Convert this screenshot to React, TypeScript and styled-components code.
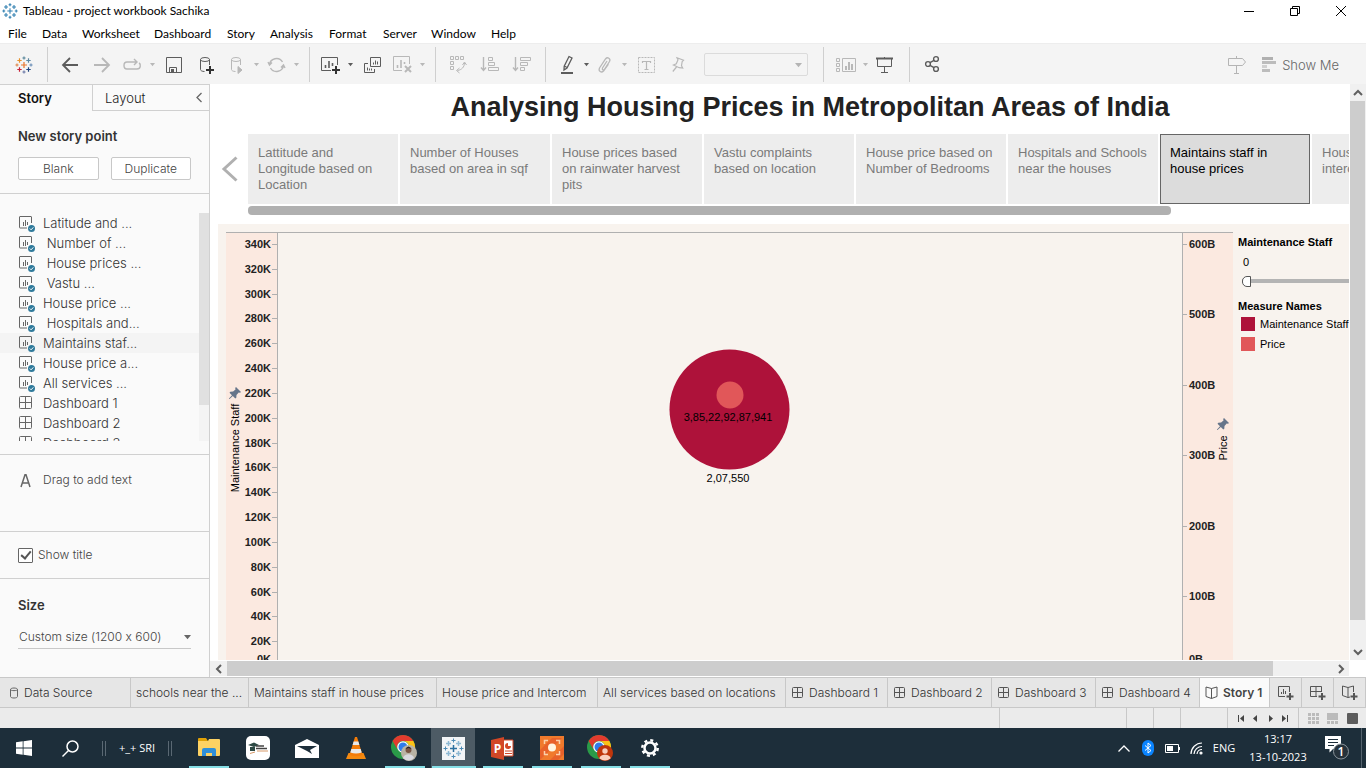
import React, { useState } from 'react';
import type { ReactNode } from 'react';
import styled, { createGlobalStyle } from 'styled-components';

const UI = `Inter, "Open Sans", sans-serif`;
const SYS = `Lato, "Open Sans", sans-serif`;
const BAR = `"Open Sans", "Noto Sans", sans-serif`;
const ARIAL = `"Liberation Sans", Arial, sans-serif`;

const GlobalStyle = createGlobalStyle`
  * { box-sizing: border-box; }
  html, body { margin: 0; overflow: hidden; }
  body { font: 12px/16px ${UI}; color: #444; background: #fff; }
  button, select, input { font: inherit; color: inherit; margin: 0; }
  button { border: 0; padding: 0; background: none; cursor: pointer; }
  svg { display: block; flex: none; overflow: visible; }
  ul { list-style: none; margin: 0; padding: 0; }
`;

const Window = styled.div`
  display: flex;
  flex-direction: column;
  height: 100vh;
  min-width: 0;
`;

/* ---------- title bar and menu ---------- */

const TitleBar = styled.header`
  display: flex;
  align-items: center;
  height: 22px;
  flex: none;
  padding-left: 2px;
  gap: 5px;
  font: 12px/16px ${SYS};
  color: #000;
`;
const AppTitle = styled.span`
  flex: 1;
`;
const WindowButtons = styled.div`
  display: flex;
  padding-right: 2px;
`;
const WindowButton = styled.button`
  display: flex;
  align-items: center;
  justify-content: center;
  width: 46px;
  height: 22px;
  color: #000;
`;
const MenuBar = styled.nav`
  display: flex;
  align-items: flex-end;
  height: 21px;
  flex: none;
  padding-left: 8px;
`;
const MenuItem = styled.button<{ $w: number }>`
  width: ${(p) => p.$w}px;
  text-align: left;
  font: 12px/18px ${SYS};
  color: #000;
  white-space: nowrap;
`;

/* ---------- toolbar ---------- */

const Toolbar = styled.div`
  display: flex;
  align-items: stretch;
  flex: none;
  height: 41px;
  padding: 3px 0 2px;
  background: #f4f4f4;
  border-top: 1px solid #ededed;
  color: #b4b4b4;
`;
const ToolGroup = styled.div<{ $l?: number; $r?: number }>`
  display: flex;
  align-items: center;
  padding: 0 ${(p) => p.$r ?? 7}px 0 ${(p) => p.$l ?? 6}px;
  border-right: 1px solid #cfcfcf;
`;
const Tool = styled.button<{ $w?: number; $on?: boolean }>`
  display: flex;
  align-items: center;
  justify-content: center;
  width: ${(p) => p.$w ?? 32}px;
  height: 34px;
  color: ${(p) => (p.$on ? '#5c5c5c' : '#b8b8b8')};
`;
const ToolSelectBox = styled.div`
  display: grid;
  align-items: center;
  margin-left: 10px;
  width: 104px;
  > * { grid-area: 1 / 1; }
  > svg { justify-self: end; margin-right: 6px; pointer-events: none; }
`;
const ToolSelect = styled.select`
  appearance: none;
  width: 100%;
  height: 23px;
  background: transparent;
  border: 1px solid #d0d0d0;
  border-radius: 2px;
`;
const ToolbarEnd = styled.div`
  display: flex;
  align-items: center;
  margin-left: auto;
  padding-right: 27px;
  gap: 16px;
`;
const ShowMe = styled.button`
  display: flex;
  align-items: center;
  gap: 6px;
  font: 300 13px/16px ${UI};
  color: #666;
`;

/* ---------- side pane ---------- */

const Body = styled.div`
  display: flex;
  flex: 1;
  min-height: 0;
`;
const SidePane = styled.aside`
  display: flex;
  flex-direction: column;
  width: 210px;
  flex: none;
  background: #fafafa;
  border-right: 1px solid #d0d0d0;
  border-top: 1px solid #d0d0d0;
`;
const PaneTabs = styled.div`
  display: flex;
  height: 26px;
  flex: none;
`;
const StoryTab = styled.button`
  width: 92px;
  padding-left: 18px;
  text-align: left;
  font: 600 13px/24px ${UI};
  color: #111;
`;
const LayoutTab = styled.div`
  display: flex;
  flex: 1;
  align-items: center;
  justify-content: space-between;
  padding: 0 7px 0 12px;
  border-left: 1px solid #d0d0d0;
  border-bottom: 1px solid #d0d0d0;
  font: 300 13px/24px ${UI};
  color: #222;
`;
const NewPoint = styled.section`
  padding: 17px 18px 13px;
  border-bottom: 1px solid #d0d0d0;
`;
const PaneHeading = styled.h2`
  margin: 0;
  font: 600 13px/16px ${UI};
  color: #333;
`;
const ButtonPair = styled.div`
  display: flex;
  gap: 12px;
  margin-top: 13px;
`;
const PaneButton = styled.button`
  flex: 1;
  height: 23px;
  background: #fff;
  border: 1px solid #c8c8c8;
  border-radius: 2px;
  font: 300 12px/16px ${UI};
  color: #444;
`;
const SheetPane = styled.section`
  display: flex;
  height: 261px;
  padding: 19px 0 13px;
  border-bottom: 1px solid #d0d0d0;
`;
const SheetList = styled.ul`
  flex: 1;
  min-width: 0;
  overflow: hidden;
`;
const SheetItem = styled.li<{ $sel?: boolean }>`
  background: ${(p) => (p.$sel ? '#f4f4f4' : 'transparent')};
`;
const SheetButton = styled.button`
  display: flex;
  align-items: center;
  width: 100%;
  height: 20px;
  padding-left: 18px;
  gap: 7px;
  font: 300 13px/20px ${UI};
  color: #333;
  white-space: pre;
`;
const ListTrack = styled.div`
  width: 10px;
  background: #f4f4f4;
`;
const ListThumb = styled.div`
  height: 84%;
  background: #e0e0e0;
`;
const DragText = styled.section`
  display: flex;
  align-items: center;
  height: 77px;
  padding: 0 0 26px 18px;
  gap: 10px;
  font-weight: 300;
  border-bottom: 1px solid #d0d0d0;
`;
const TitleOption = styled.label`
  display: flex;
  align-items: center;
  height: 47px;
  padding-left: 18px;
  gap: 5px;
  font-weight: 300;
  border-bottom: 1px solid #d0d0d0;
`;
const Check = styled.input`
  appearance: none;
  display: grid;
  place-items: center;
  width: 15px;
  height: 15px;
  background: #fff;
  border: 1px solid #666;
  border-radius: 1px;
  &:checked::before {
    content: '';
    width: 4px;
    height: 8px;
    margin-bottom: 2px;
    border: solid #555;
    border-width: 0 2px 2px 0;
    transform: rotate(40deg);
  }
`;
const SizePane = styled.section`
  padding: 18px;
`;
const SizeBox = styled.div`
  display: grid;
  align-items: center;
  margin-top: 11px;
  border-bottom: 1px solid #c8c8c8;
  > * { grid-area: 1 / 1; }
  > svg { justify-self: end; pointer-events: none; color: #666; }
`;
const SizeSelect = styled.select`
  appearance: none;
  width: 100%;
  height: 23px;
  border: 0;
  padding-left: 1px;
  background: transparent;
  font-weight: 300;
  font-feature-settings: 'calt' 0;
`;

/* ---------- story canvas ---------- */

const Workspace = styled.main`
  display: grid;
  flex: 1;
  min-width: 0;
  grid-template: minmax(0, 1fr) 17px / minmax(0, 1fr) 17px;
`;
const Viewport = styled.div`
  overflow: hidden;
  background: #fff;
`;
const StorySheet = styled.div`
  width: 1200px;
  overflow: hidden;
  font-family: ${ARIAL};
`;
const StoryTitle = styled.h1`
  margin: 0;
  padding-top: 5px;
  height: 50px;
  text-align: center;
  font: 700 27px/36px ${ARIAL};
  color: #222;
`;
const Navigator = styled.div`
  display: flex;
`;
const NavArrow = styled.button`
  flex: none;
  width: 38px;
  height: 70px;
  padding-left: 12px;
`;
const Points = styled.div`
  display: flex;
  gap: 2px;
`;
const Point = styled.button<{ $on?: boolean }>`
  width: 150px;
  height: 70px;
  flex: none;
  display: flex;
  padding: 10px 9px;
  text-align: left;
  font: 13px/16px ${ARIAL};
  color: ${(p) => (p.$on ? '#000' : '#7a7a7a')};
  background: ${(p) => (p.$on ? '#dcdcdc' : '#ededed')};
  border: 1px solid ${(p) => (p.$on ? '#666' : '#ededed')};
`;
const PointScroll = styled.div`
  width: 923px;
  height: 9px;
  margin: 2px 0 9px 38px;
  border-radius: 4px;
  background: #b0b0b0;
`;
const Dashboard = styled.div`
  display: flex;
  margin-left: 8px;
  padding: 8px;
  background: #f8f3ee;
`;
const AxisText = styled.text`
  font: 700 11px ${ARIAL};
  fill: #222;
`;
const MarkText = styled.text`
  font: 11px ${ARIAL};
  fill: #000;
  text-anchor: middle;
`;
const Legend = styled.div`
  padding: 2px 0 0 5px;
  width: 170px;
  font: 11px/16px ${ARIAL};
  color: #000;
`;
const LegendHeading = styled.label`
  display: block;
  font-weight: 700;
`;
const LegendTitle = styled.h3`
  margin: 11px 0 0;
  font: 700 11px/16px ${ARIAL};
`;
const Value = styled.output`
  display: block;
  margin: 4px 0 0 5px;
`;
const Slider = styled.input`
  appearance: none;
  display: block;
  width: 150px;
  height: 12px;
  margin: 5px 0 0 4px;
  background: linear-gradient(#b4b4b4, #b4b4b4) center / 100% 4px no-repeat;
  &::-webkit-slider-thumb {
    appearance: none;
    width: 9px;
    height: 11px;
    border: 1px solid #555;
    border-radius: 5px 0 0 5px;
    background: #fff;
  }
`;
const LegendRow = styled.li`
  display: flex;
  align-items: center;
  height: 20px;
  padding-left: 3px;
  gap: 5px;
  white-space: nowrap;
`;
const Swatch = styled.span<{ $c: string }>`
  width: 14px;
  height: 14px;
  background: ${(p) => p.$c};
`;

/* ---------- scroll bars ---------- */

const VScroll = styled.div`
  display: flex;
  flex-direction: column;
  margin-left: 1px;
  background: #f0f0f0;
  padding-right: 1px;
`;
const HScroll = styled.div`
  display: flex;
  margin: 1px 0;
  background: #f0f0f0;
`;
const ScrollArrow = styled.button`
  display: flex;
  align-items: center;
  justify-content: center;
  width: 17px;
  height: 17px;
  flex: none;
  color: #606060;
  ${VScroll} & { width: 15px; }
  ${HScroll} & { height: 15px; }
`;
const Track = styled.div<{ $thumb: number }>`
  display: grid;
  flex: 1;
  ${VScroll} & { grid-template-rows: ${(p) => p.$thumb}fr ${(p) => 1000 - p.$thumb}fr; }
  ${HScroll} & { grid-template-columns: ${(p) => p.$thumb}fr ${(p) => 1000 - p.$thumb}fr; }
`;
const Thumb = styled.div`
  background: #cdcdcd;
`;

/* ---------- sheet tabs and status bar ---------- */

const SheetTabs = styled.div`
  display: flex;
  height: 31px;
  flex: none;
  background: #e6e6e6;
  border-top: 1px solid #c8c8c8;
  border-bottom: 1px solid #c8c8c8;
`;
const SheetTab = styled.button<{ $w: number; $on?: boolean }>`
  display: flex;
  align-items: center;
  gap: 5px;
  width: ${(p) => p.$w}px;
  padding-left: 5px;
  border-right: 1px solid #c8c8c8;
  background: ${(p) => (p.$on ? '#fafafa' : 'transparent')};
  font: ${(p) => (p.$on ? 600 : 300)} 12px/16px ${UI};
  color: ${(p) => (p.$on ? '#444' : '#333')};
  white-space: nowrap;
`;
const SourceTab = styled(SheetTab)`
  padding-left: 9px;
`;
const NewTab = styled(SheetTab)`
  padding: 0;
  justify-content: center;
`;
const StatusBar = styled.footer`
  display: flex;
  justify-content: flex-end;
  height: 20px;
  flex: none;
  background: #ebebeb;
`;
const StatusCell = styled.div<{ $w: number }>`
  display: flex;
  align-items: center;
  justify-content: space-evenly;
  width: ${(p) => p.$w}px;
  border-left: 1px solid #c8c8c8;
`;

/* ---------- task bar ---------- */

const TaskBar = styled.div`
  display: flex;
  height: 40px;
  flex: none;
  background: #1d2e3a;
  color: #fff;
  font: 11px/18px ${BAR};
`;
const TaskButton = styled.button<{ $w?: number; $open?: boolean; $active?: boolean }>`
  display: flex;
  align-items: center;
  justify-content: center;
  width: ${(p) => p.$w ?? 49}px;
  height: 40px;
  color: #fff;
  background:
    ${(p) => (p.$open ? `linear-gradient(#86dfe6, #86dfe6) bottom / ${p.$active ? 44 : 40}px 2px no-repeat,` : '')}
    ${(p) => (p.$active ? 'linear-gradient(90deg, transparent 2px, #4d5b65 2px 46px, transparent 46px)' : 'none')};
`;
const DeskBar = styled.div`
  display: flex;
  align-items: center;
  justify-content: space-between;
  width: 70px;
  margin: 0 12px 0 9px;
`;
const Grip = styled.span`
  width: 4px;
  height: 15px;
  border: solid #5a6873;
  border-width: 0 1px;
`;
const Tray = styled.div`
  display: flex;
  align-items: center;
  margin-left: auto;
`;
const TrayButton = styled.button`
  display: flex;
  align-items: center;
  justify-content: center;
  width: 24px;
  height: 40px;
  color: #fff;
`;
const Language = styled.button`
  width: 32px;
  color: #fff;
  text-align: center;
`;
const Clock = styled.time`
  width: 60px;
  text-align: center;
  margin: 0 17px 0 8px;
`;
const DeskEdge = styled.button`
  width: 5px;
  height: 40px;
  margin-left: 12px;
  border-left: 1px solid #55636e;
`;

/* ---------- icons ---------- */

const Svg = ({ w = 18, h = w, children, sw = 1 }: { w?: number; h?: number; sw?: number; children: ReactNode }) => (
  <svg width={w} height={h} viewBox={`0 0 ${w} ${h}`} fill="none" stroke="currentColor" strokeWidth={sw} aria-hidden="true">
    {children}
  </svg>
);

const Caret = ({ w = 5, c = 'currentColor' }: { w?: number; c?: string }) => (
  <Svg w={w} h={4}>
    <path d={`M0 0h${w}L${w / 2} ${w / 2 + 0.8}z`} fill={c} stroke="none" />
  </Svg>
);

const plus = (x: number, y: number, r: number) => `M${x - r} ${y}h${2 * r}M${x} ${y - r}v${2 * r}`;

const TableauMark = ({ size, mono }: { size: number; mono?: boolean }) => {
  const c = mono
    ? Array(9).fill('#2f7fb0')
    : ['#e8762c', '#e8912b', '#c72037', '#5c87a0', '#1f447e', '#59879b', '#e0864b', '#6b8fb8', '#6d7ba8'];
  const pts: [number, number, number][] = [
    [9, 9, 3], [4.5, 4.5, 2.2], [4.5, 13.5, 2.2], [13.5, 4.5, 2.2], [13.5, 13.5, 2.2],
    [9, 2, 1.6], [2, 9, 1.6], [16, 9, 1.6], [9, 16, 1.6],
  ];
  return (
    <svg width={size} height={size} viewBox="0 0 18 18" aria-hidden="true">
      {pts.map(([x, y, r], i) => (
        <path key={i} d={plus(x, y, r)} stroke={c[i]} strokeWidth={1.2} />
      ))}
    </svg>
  );
};

const DbIcon = () => (
  <>
    <ellipse cx="7" cy="3.5" rx="4.5" ry="2" />
    <path d="M2.5 3.5v10c0 1 1.5 2 4 2M11.5 3.5V9" />
  </>
);

const SheetIcon = () => (
  <Svg w={18} h={18}>
    <path d="M13.5 9V3q0-.5-.5-.5H2q-.5 0-.5.5v10.500q0 .5.5.5H9" stroke="#666" />
    <path d="M5.500 8v4M7.500 6v6M9.500 8v3" stroke="#666" />
    <circle cx="13.500" cy="14.500" r="3.500" fill="#2f7a9b" stroke="none" />
    <path d="M11.800 14.500l1.300 1.300 2.200-2.400" stroke="#fff" />
  </Svg>
);

const TabGrid = () => (
  <Svg w={13} h={12}>
    <rect x="1.500" y=".5" width="10" height="10" rx="1" stroke="#555" />
    <path d="M6.500 1v10M2 5.500h10" stroke="#555" />
  </Svg>
);

const BookIcon = () => (
  <Svg w={13} h={13}>
    <path d="M6.500 2.500L1 1v9.500l5.500 2 5.500-2V1zM6.500 2.500v10" stroke="#555" />
  </Svg>
);

const AddMark = () => <path d="M12 8v7M8.500 11.500h7" stroke="#555" strokeWidth="2" />;

const PinMark = ({ x, y }: { x: number; y: number }) => (
  <path
    transform={`translate(${x} ${y})`}
    d="M7 0l5 5-1 .8-1.300-.3L7.500 8l-.2 2.800-1 .8L3.800 9 .5 12H0v-.5L3 8.200.500 5.800l.8-1 2.800-.2 2.400-2L6.200 1z"
    fill="#66758a"
    stroke="none"
  />
);

const Chrome = ({ children }: { children: ReactNode }) => (
  <svg width="27" height="26" viewBox="0 0 27 26" aria-hidden="true">
    <circle cx="12" cy="12" r="12" fill="#2a9a48" />
    <path d="M1.600 6A12 12 0 0 1 22.400 6H12a6 6 0 0 0-5.200 9z" fill="#e33b2e" />
    <path d="M22.400 6A12 12 0 0 1 12 24l5.200-9A6 6 0 0 0 12 6z" fill="#fbc116" />
    <circle cx="12" cy="12" r="5.800" fill="#fff" />
    <circle cx="12" cy="12" r="4.500" fill="#2f7bea" />
    {children}
  </svg>
);

/* ---------- data ---------- */

const menus: [string, number][] = [
  ['File', 34], ['Data', 40], ['Worksheet', 72], ['Dashboard', 73], ['Story', 43],
  ['Analysis', 59], ['Format', 54], ['Server', 48], ['Window', 60], ['Help', 30],
];

const sheets = [
  'Latitude and ...', ' Number of ...', ' House prices ...', ' Vastu ...', 'House price ...',
  ' Hospitals and...', 'Maintains staf...', 'House price a...', 'All services ...',
];
const dashboards = ['Dashboard 1', 'Dashboard 2', 'Dashboard 3'];

const points = [
  'Lattitude and Longitude based on Location',
  'Number of Houses based on area in sqf',
  'House prices based on rainwater harvest pits',
  'Vastu complaints based on location',
  'House price based on Number of Bedrooms',
  'Hospitals and Schools near the houses',
  'Maintains staff in house prices',
  'House price and intercom',
];

const leftAxis = Array.from({ length: 17 }, (_, i) => ({ label: `${340 - i * 20}K`, y: 12.5 + Math.round(i * 24.83) }));
const rightAxis = Array.from({ length: 6 }, (_, i) => ({ label: `${600 - i * 100}B`, y: 12.5 + Math.round(i * 70.4) }));

/* ---------- chart ---------- */

const BubbleChart = () => (
  <svg width="1007" height="444" viewBox="0 0 1007 444" role="img" aria-label="Maintenance staff and price">
    <rect width="51" height="444" fill="#fbe9e0" />
    <rect x="957" width="50" height="444" fill="#fbe9e0" />
    <path d="M0 .5h1007M51.500 0v444M956.500 0v444" stroke="#b0b0b0" />
    {leftAxis.map((t) => (
      <g key={t.label}>
        <path d={`M46 ${t.y}h5`} stroke="#b0b0b0" />
        <AxisText x="45" y={t.y + 3.5} textAnchor="end">{t.label}</AxisText>
      </g>
    ))}
    <AxisText x="45" y="431" textAnchor="end">0K</AxisText>
    {rightAxis.map((t) => (
      <g key={t.label}>
        <path d={`M957 ${t.y}h4`} stroke="#b0b0b0" />
        <AxisText x="963" y={t.y + 3}>{t.label}</AxisText>
      </g>
    ))}
    <AxisText x="963" y="431">0B</AxisText>
    <MarkText transform="translate(13 216) rotate(-90)">Maintenance Staff</MarkText>
    <MarkText transform="translate(1001 216) rotate(-90)">Price</MarkText>
    <PinMark x={3} y={155} />
    <PinMark x={991} y={186} />
    <circle cx="503.5" cy="177.5" r="60" fill="#ae123a" />
    <circle cx="504" cy="163" r="13.5" fill="#e15759" />
    <MarkText x="502" y="189">3,85,22,92,87,941</MarkText>
    <MarkText x="502" y="250">2,07,550</MarkText>
  </svg>
);

/* ---------- page ---------- */

export default function App() {
  const [showTitle, setShowTitle] = useState(true);
  const [staff, setStaff] = useState(0);

  return (
    <Window>
      <GlobalStyle />

      <TitleBar>
        <TableauMark size={16} mono />
        <AppTitle>Tableau - project workbook Sachika</AppTitle>
        <WindowButtons>
          <WindowButton aria-label="Minimise"><Svg w={10} h={10}><path d="M0 5.500h10" /></Svg></WindowButton>
          <WindowButton aria-label="Restore">
            <Svg w={10} h={10}><path d="M.5 2.500h7v7h-7zM2.500 2.500v-2h7v7h-2" /></Svg>
          </WindowButton>
          <WindowButton aria-label="Close"><Svg w={10} h={10}><path d="M0 0l10 10M10 0L0 10" /></Svg></WindowButton>
        </WindowButtons>
      </TitleBar>

      <MenuBar>
        {menus.map(([m, w]) => <MenuItem key={m} $w={w}>{m}</MenuItem>)}
      </MenuBar>

      <Toolbar>
        <ToolGroup $l={0} $r={0}><Tool $w={47} aria-label="Start page"><TableauMark size={18} /></Tool></ToolGroup>
        <ToolGroup>
          <Tool $on aria-label="Back"><Svg w={16} h={16} sw={1.8}><path d="M16 8H1M8 1L1 8l7 7" /></Svg></Tool>
          <Tool aria-label="Forward"><Svg w={16} h={16} sw={1.8}><path d="M0 8h15M8 1l7 7-7 7" /></Svg></Tool>
          <Tool $w={28} aria-label="Replay">
            <Svg w={18} h={12} sw={1.4}><path d="M14 3H4C0 3 0 10 4 10h10c4 0 4-5 2-6M11 0l3 3-3 3" /></Svg>
          </Tool>
          <Tool $w={12} aria-label="Replay options"><Caret /></Tool>
          <Tool $on aria-label="Save">
            <Svg w={16} h={16}><path d="M.5.5h15v15h-15zM3.500 15V10.500h7V15M5.500 12v3" /><path d="M6 12h2v3H6z" fill="currentColor" stroke="none" /></Svg>
          </Tool>
          <Tool $on aria-label="New data source"><Svg w={16} h={18}><DbIcon /><path d="M12 10v8M8 14h8" stroke="#333" strokeWidth="2" /></Svg></Tool>
          <Tool $w={28} aria-label="Run updates"><Svg w={14} h={18}><DbIcon /><path d="M9 10.500l4 3.500-4 3.500z" fill="currentColor" /></Svg></Tool>
          <Tool $w={12} aria-label="Update options"><Caret /></Tool>
          <Tool $w={28} aria-label="Refresh">
            <Svg w={17} h={16} sw={1.4}><path d="M1.500 8a7 7 0 0 1 13-3M15.500 8a7 7 0 0 1-13 3M.0 5l1.500 3L4 5.500M17 11l-1.500-3L13 10.500" /></Svg>
          </Tool>
          <Tool $w={12} aria-label="Refresh options"><Caret /></Tool>
        </ToolGroup>
        <ToolGroup>
          <Tool $w={28} $on aria-label="New worksheet">
            <Svg w={19} h={18}><path d="M16.500 9V1.500H.5v13H10" /><path d="M4.500 12V9M8 12V5M11.500 10V7" strokeWidth="1.600" /><path d="M15 10v8M11 14h8" stroke="#333" strokeWidth="2" /></Svg>
          </Tool>
          <Tool $w={12} $on aria-label="Worksheet options"><Caret /></Tool>
          <Tool $on aria-label="Duplicate">
            <Svg w={17} h={16}><path d="M6.500.5h10v9h-10zM4 6.500H.5v9h10V12M9.500 7.500v-2M11.500 7.500v-4M13.500 7.500v-3M3.500 13.500v-3M5.500 13.500v-2M7.500 13.500v-2" /></Svg>
          </Tool>
          <Tool $w={28} aria-label="Clear sheet">
            <Svg w={19} h={17}><path d="M16.500 8V.5H.5v14H9" /><path d="M4.500 12V9M8 12V4M11.500 8V6" strokeWidth="1.600" /><path d="M12 10l6 6M18 10l-6 6" strokeWidth="2" /></Svg>
          </Tool>
          <Tool $w={12} aria-label="Clear options"><Caret /></Tool>
        </ToolGroup>
        <ToolGroup>
          <Tool aria-label="Swap rows and columns">
            <Svg w={17} h={17}><path d="M.5.5h3v3h-3zM5.500.5h3v3h-3zM10.500.5h3v3h-3zM.5 5.500h3v3h-3zM.5 10.500h3v3h-3zM14.500 7c0 4-3 7-7 7.500M12.500 9l2-3 2 3M9.500 12l-3 2.500 3 2.500" /></Svg>
          </Tool>
          <Tool aria-label="Sort ascending">
            <Svg w={18} h={15}><path d="M2.500 0v13M0 10.500l2.500 3 2.500-3" strokeWidth="1.400" /><path d="M7.500.5h4v3h-4zM7.500 5.500h6v3h-6zM7.500 10.500h10v3h-10z" /></Svg>
          </Tool>
          <Tool aria-label="Sort descending">
            <Svg w={18} h={15}><path d="M2.500 0v13M0 10.500l2.500 3 2.500-3" strokeWidth="1.400" /><path d="M7.500.5h10v3h-10zM7.500 5.500h7v3h-7zM7.500 10.500h4v3h-4z" /></Svg>
          </Tool>
        </ToolGroup>
        <ToolGroup $l={8} $r={15}>
          <Tool $w={26} $on aria-label="Highlight">
            <Svg w={12} h={18} sw={1.3}><path d="M8 .5l3 1.500-5 10-3 2 .2-3.800zM3.300 10l2.700 1.500" /><path d="M0 17h12" strokeWidth="2" /></Svg>
          </Tool>
          <Tool $w={12} $on aria-label="Highlight options"><Caret /></Tool>
          <Tool $w={26} aria-label="Group">
            <Svg w={14} h={16} sw={1.300}><path d="M9 4l-4.500 7c-.8 2 1.200 2.500 2 1.300L11.500 4.500C13 1.500 9.500-.5 7.500 2L1.500 11c-1.500 3.500 2 5 4 3l5-7" /></Svg>
          </Tool>
          <Tool $w={12} aria-label="Group options"><Caret /></Tool>
          <Tool aria-label="Show labels">
            <Svg w={17} h={16}><rect x=".5" y=".5" width="16" height="15" strokeDasharray="2 1" /><path d="M4.500 6V4.500h8V6M8.500 4.500v8M6.500 12.500h4" strokeWidth="1.200" /></Svg>
          </Tool>
          <Tool aria-label="Fix axes">
            <Svg w={13} h={15} sw={1.200}><path d="M5 .8l6.500 2.500-1.300 1.200-.7 4.200 1.200 2.300-3.500-.3L1.500 8l2.800-1.200L6 2.800zM4.500 10L.8 14.500" /></Svg>
          </Tool>
          <ToolSelectBox>
            <ToolSelect aria-label="Fit" disabled />
            <Caret w={7} />
          </ToolSelectBox>
        </ToolGroup>
        <ToolGroup $l={9} $r={12}>
          <Tool $w={26} aria-label="Show cards">
            <Svg w={20} h={14}><path d="M.5.5h3v3h-3zM.5 5.500h3v3h-3zM.5 10.500h3v3h-3zM6.500.5h13v13h-13z" /><path d="M10 12V8M13 12V4M16 12V6" strokeWidth="2" /></Svg>
          </Tool>
          <Tool $w={12} aria-label="Card options"><Caret /></Tool>
          <Tool $w={26} $on aria-label="Presentation mode">
            <Svg w={17} h={16}><path d="M0 1.500h17" strokeWidth="2" /><path d="M1.500 1.500v8h14v-8M8.500 0v1M8.500 10v5M5 15.500h7" /></Svg>
          </Tool>
        </ToolGroup>
        <Tool $w={44} $on aria-label="Share">
          <Svg w={14} h={16} sw={1.400}><circle cx="3" cy="8" r="2.400" /><circle cx="11" cy="3" r="2.400" /><circle cx="11" cy="13" r="2.400" /><path d="M5 6.700l4-2.400M5 9.300l4 2.400" /></Svg>
        </Tool>
        <ToolbarEnd>
          <Svg w={18} h={18}><path d="M.5 2.500h14l3 3.500-3 3.500H.5zM8.500 0v2M8.500 10v7M6 17.500h5" /></Svg>
          <ShowMe>
            <Svg w={14} h={15}>
              <path d="M0 0h11v3H0z" fill="#b0b0b0" stroke="none" /><path d="M0 4h14v3H0z" fill="#bcbcbc" stroke="none" />
              <path d="M0 8h5v3H0z" fill="#d0d0d0" stroke="none" /><path d="M0 12h8v3H0z" fill="#bcbcbc" stroke="none" />
            </Svg>
            Show Me
          </ShowMe>
        </ToolbarEnd>
      </Toolbar>

      <Body>
        <SidePane>
          <PaneTabs>
            <StoryTab>Story</StoryTab>
            <LayoutTab>
              <button>Layout</button>
              <button aria-label="Collapse pane"><Svg w={6} h={9} sw={1.300}><path d="M5.500 0L1 4.500 5.500 9" stroke="#666" /></Svg></button>
            </LayoutTab>
          </PaneTabs>
          <NewPoint>
            <PaneHeading>New story point</PaneHeading>
            <ButtonPair>
              <PaneButton>Blank</PaneButton>
              <PaneButton>Duplicate</PaneButton>
            </ButtonPair>
          </NewPoint>
          <SheetPane>
            <SheetList>
              {sheets.map((s) => (
                <SheetItem key={s} $sel={s.startsWith('Maintains')}>
                  <SheetButton><SheetIcon />{s}</SheetButton>
                </SheetItem>
              ))}
              {dashboards.map((s) => (
                <SheetItem key={s}>
                  <SheetButton><Svg w={18} h={14}><rect x="1.500" y=".5" width="12" height="12" rx="1" stroke="#666" /><path d="M7.500 1v12M2 6.500h12" stroke="#666" /></Svg>{s}</SheetButton>
                </SheetItem>
              ))}
            </SheetList>
            <ListTrack><ListThumb /></ListTrack>
          </SheetPane>
          <DragText>
            <Svg w={15} h={13} sw={1.500}><path d="M3 13L7 .8h1L12 13M4.500 9h6" stroke="#666" /></Svg>
            Drag to add text
          </DragText>
          <TitleOption>
            <Check type="checkbox" checked={showTitle} onChange={(e) => setShowTitle(e.target.checked)} />
            Show title
          </TitleOption>
          <SizePane>
            <PaneHeading as="label" htmlFor="size">Size</PaneHeading>
            <SizeBox>
              <SizeSelect id="size"><option>Custom size (1200 x 600)</option></SizeSelect>
              <Caret w={7} />
            </SizeBox>
          </SizePane>
        </SidePane>

        <Workspace>
          <Viewport>
            <StorySheet>
              <StoryTitle>Analysing Housing Prices in Metropolitan Areas of India</StoryTitle>
              <Navigator>
                <NavArrow aria-label="Previous story points">
                  <Svg w={16} h={26} sw={3}><path d="M14.500 1.500L2 13l12.500 11.500" stroke="#b0b0b0" /></Svg>
                </NavArrow>
                <Points>
                  {points.map((p, i) => <Point key={p} $on={i === 6}>{p}</Point>)}
                </Points>
              </Navigator>
              <PointScroll />
              <Dashboard>
                <BubbleChart />
                <Legend>
                  <LegendHeading htmlFor="staff">Maintenance Staff</LegendHeading>
                  <Value htmlFor="staff">{staff}</Value>
                  <Slider id="staff" type="range" min={0} max={100} value={staff} onChange={(e) => setStaff(Number(e.target.value))} />
                  <LegendTitle>Measure Names</LegendTitle>
                  <ul>
                    <LegendRow><Swatch $c="#ae123a" />Maintenance Staff</LegendRow>
                    <LegendRow><Swatch $c="#e15759" />Price</LegendRow>
                  </ul>
                </Legend>
              </Dashboard>
            </StorySheet>
          </Viewport>
          <VScroll>
            <ScrollArrow aria-label="Scroll up"><Svg w={8} h={6} sw={2}><path d="M0 5l4-4 4 4" /></Svg></ScrollArrow>
            <Track $thumb={958}><Thumb /></Track>
            <ScrollArrow aria-label="Scroll down"><Svg w={8} h={6} sw={2}><path d="M0 1l4 4 4-4" /></Svg></ScrollArrow>
          </VScroll>
          <HScroll>
            <ScrollArrow aria-label="Scroll left"><Svg w={6} h={8} sw={2}><path d="M5 0L1 4l4 4" /></Svg></ScrollArrow>
            <Track $thumb={947}><Thumb /></Track>
            <ScrollArrow aria-label="Scroll right"><Svg w={6} h={8} sw={2}><path d="M1 0l4 4-4 4" /></Svg></ScrollArrow>
          </HScroll>
        </Workspace>
      </Body>

      <SheetTabs>
        <SourceTab $w={131}>
          <Svg w={10} h={12}><path d="M1.500 2.500v7c0 2 7 2 7 0v-7c0-2-7-2-7 0c0 1.500 7 1.500 7 0" stroke="#666" /></Svg>
          Data Source
        </SourceTab>
        <SheetTab $w={118}>schools near the ...</SheetTab>
        <SheetTab $w={188}>Maintains staff in house prices</SheetTab>
        <SheetTab $w={161}>House price and Intercom</SheetTab>
        <SheetTab $w={188}>All services based on locations</SheetTab>
        <SheetTab $w={102}><TabGrid />Dashboard 1</SheetTab>
        {[2, 3, 4].map((n) => (
          <SheetTab key={n} $w={104}><TabGrid />{`Dashboard ${n}`}</SheetTab>
        ))}
        <SheetTab $w={70} $on><BookIcon />Story 1</SheetTab>
        <NewTab $w={32} aria-label="New worksheet">
          <Svg w={16}><path d="M11.500 7V1.500H.5v10H7M3.500 9V7M5.500 9V4M7.500 9V6" stroke="#555" /><AddMark /></Svg>
        </NewTab>
        <NewTab $w={32} aria-label="New dashboard">
          <Svg w={16}><path d="M11.500 7V1.500H.5v10H7M6 2v9M1 6.500h10" stroke="#555" /><AddMark /></Svg>
        </NewTab>
        <NewTab $w={32} aria-label="New story">
          <Svg w={16}><path d="M11.500 7V1L6 2.500.5 1v9.500L6 12.500 8 12M6 2.500v10" stroke="#555" /><AddMark /></Svg>
        </NewTab>
      </SheetTabs>

      <StatusBar>
        <StatusCell $w={127} /><StatusCell $w={27} /><StatusCell $w={27} /><StatusCell $w={47} />
        <StatusCell $w={71}>
          <button aria-label="First"><Svg w={6} h={7}><path d="M.5 0v7" /><path d="M6 0v7L2 3.500z" fill="#444" stroke="none" /></Svg></button>
          <button aria-label="Previous"><Svg w={5} h={7}><path d="M4 0v7L0 3.500z" fill="#444" stroke="none" /></Svg></button>
          <button aria-label="Next"><Svg w={5} h={7}><path d="M1 0v7l4-3.500z" fill="#444" stroke="none" /></Svg></button>
          <button aria-label="Last"><Svg w={6} h={7}><path d="M5.500 0v7" /><path d="M0 0v7l4-3.500z" fill="#444" stroke="none" /></Svg></button>
        </StatusCell>
        <StatusCell $w={68}>
          <Svg w={11}><path d="M0 1.500h11M0 5.500h11M0 9.500h11" stroke="#bbb" strokeWidth="3" strokeDasharray="3 1" /></Svg>
          <Svg w={11}><path d="M0 0h11v7H0z" fill="#bbb" stroke="none" /><path d="M0 9.500h11" stroke="#bbb" strokeWidth="3" strokeDasharray="3 1" /></Svg>
          <Svg w={11}><rect width="11" height="11" rx="1" fill="#5c5c5c" stroke="none" /></Svg>
        </StatusCell>
      </StatusBar>

      <TaskBar>
        <TaskButton $w={48} aria-label="Start">
          <Svg w={16} h={16}><path d="M0 2.300L6.700 1.300V7.600H0zM7.500 1.200L16 0v7.600H7.500zM0 8.400h6.700v6.300L0 13.700zM7.500 8.400H16V16l-8.500-1.200z" fill="#fff" stroke="none" /></Svg>
        </TaskButton>
        <TaskButton $w={45} aria-label="Search">
          <Svg w={17} h={17} sw={1.500}><circle cx="10.500" cy="6.500" r="5.500" /><path d="M6.500 10.500L.5 16.500" /></Svg>
        </TaskButton>
        <DeskBar><Grip />+_+ SRI<Grip /></DeskBar>
        <TaskButton $open aria-label="File Explorer">
          <svg width="22" height="20" viewBox="0 0 22 20" aria-hidden="true">
            <path d="M0 1q0-1 1-1h7l2 3H0z" fill="#e0a106" /><path d="M0 3h10l1-2h10q1 0 1 1v15q0 1-1 1H1q-1 0-1-1z" fill="#fdd263" />
            <path d="M4 18v-6q0-2 2-2h10q2 0 2 2v6h-4v-3H8v3z" fill="#2f8fd8" />
          </svg>
        </TaskButton>
        <TaskButton aria-label="Learning app">
          <svg width="24" height="24" viewBox="0 0 24 24" aria-hidden="true">
            <rect width="24" height="24" rx="5" fill="#fff" /><path d="M2 9l6-2.500L13 9l-5 2zM4 11h5v4H4z" fill="#2d4a45" />
            <path d="M10 10h8M10 12.500h11" stroke="#444" strokeWidth="1.500" /><path d="M11 15h11M4 17.500l5-1.500" stroke="#d79a6a" />
          </svg>
        </TaskButton>
        <TaskButton aria-label="Mail">
          <svg width="24" height="19" viewBox="0 0 24 19" aria-hidden="true"><path d="M0 6L12 0l12 6v13H0z" fill="#fff" /><path d="M2 7h20l-7 4 2 4-5-3z" fill="#1d2e3a" /></svg>
        </TaskButton>
        <TaskButton aria-label="Media player">
          <svg width="20" height="22" viewBox="0 0 20 22" aria-hidden="true">
            <path d="M2.500 16h15l2.500 6H0z" fill="#f58a10" /><path d="M9 0h2l5.500 18q-6.500 2.500-13 0z" fill="#f47c08" />
            <path d="M7.600 4.500h4.800l1 3.500H6.600zM5.300 12h9.400l1 3.500q-5.700 2-11.400 0z" fill="#e9e9e9" />
          </svg>
        </TaskButton>
        <TaskButton $open aria-label="Chrome">
          <Chrome><circle cx="18" cy="18" r="8" fill="#b9b3a4" /><circle cx="17.500" cy="15" r="3" fill="#7b5544" /><path d="M12 23c1-5 10-5 11 0q-5.500 5-11 0z" fill="#d9d9df" /><path d="M14.500 14q3-5 6 0l-3-1z" fill="#2b2322" /></Chrome>
        </TaskButton>
        <TaskButton $open $active aria-label="Tableau">
          <svg width="23" height="23" viewBox="0 0 23 23" aria-hidden="true">
            <rect width="23" height="23" fill="#f2f4f6" />
            <path d={plus(11.5, 11.5, 3.5)} stroke="#2b6f9f" strokeWidth="1.500" />
            <path d={plus(6.5, 6.5, 2.5) + plus(16.5, 6.5, 2.5) + plus(6.5, 16.5, 2.5) + plus(16.5, 16.5, 2.5)} stroke="#8db8d3" strokeWidth="1.500" />
            <path d={plus(11.5, 3.5, 2) + plus(3.5, 11.5, 2) + plus(19.5, 11.5, 2) + plus(11.5, 19.5, 2)} stroke="#4c8bb5" />
          </svg>
        </TaskButton>
        <TaskButton $open aria-label="PowerPoint">
          <svg width="23" height="23" viewBox="0 0 23 23" aria-hidden="true">
            <path d="M12 3h10v16H12z" fill="#fff" stroke="#d24726" /><path d="M14 14h7M14 16.500h7" stroke="#d24726" /><path d="M17 6a3 3 0 1 0 3 3h-3z" fill="#d24726" /><path d="M0 3L13 0v23L0 20z" fill="#d24726" />
            <text x="6.500" y="15.500" fill="#fff" fontFamily="Open Sans, sans-serif" fontSize="12" fontWeight="700" textAnchor="middle">P</text>
          </svg>
        </TaskButton>
        <TaskButton $open aria-label="Screen recorder">
          <svg width="24" height="24" viewBox="0 0 24 24" aria-hidden="true">
            <rect width="24" height="24" fill="#f07a2c" /><path d="M0 14L12 2h10L0 24zM10 24L24 10v8l-6 6z" fill="#e8622a" /><circle cx="12" cy="11.500" r="4" fill="#fff6e0" />
            <path d="M4.500 8V4.500H8M16 4.500h3.500V8M4.500 15v3.500H8M16 18.500h3.500V15" fill="none" stroke="#fbd0aa" strokeWidth="1.500" />
          </svg>
        </TaskButton>
        <TaskButton $open aria-label="Chrome, second profile">
          <Chrome><circle cx="18" cy="18" r="8" fill="#bf360c" /><circle cx="18" cy="16" r="2.700" fill="#f8cfc0" /><path d="M12.500 23.500c0-5 11-5 11 0q-5.500 4-11 0z" fill="#f8cfc0" /></Chrome>
        </TaskButton>
        <TaskButton $open aria-label="Settings">
          <svg width="18" height="18" viewBox="0 0 18 18" aria-hidden="true">
            <circle cx="9" cy="9" r="5.500" fill="none" stroke="#fff" strokeWidth="2.500" />
            <circle cx="9" cy="9" r="7.700" fill="none" stroke="#fff" strokeWidth="2.500" strokeDasharray="3 3.050" />
          </svg>
        </TaskButton>

        <Tray>
          <TrayButton aria-label="Hidden icons"><Svg w={12} h={7} sw={1.300}><path d="M.5 6.500L6 1l5.500 5.500" /></Svg></TrayButton>
          <TrayButton aria-label="Bluetooth">
            <svg width="12" height="16" viewBox="0 0 12 16" fill="none" aria-hidden="true"><rect width="12" height="16" rx="6" fill="#0a84ff" /><path d="M3 5.500l6 5L6 13V3l3 2.500-6 5" stroke="#fff" /></svg>
          </TrayButton>
          <TrayButton aria-label="Battery">
            <Svg w={15} h={9}><path d="M.5.5h13v8H.5zM14.500 3v3" /><path d="M2 2h6v5H2z" fill="#fff" stroke="none" /></Svg>
          </TrayButton>
          <TrayButton aria-label="Network">
            <Svg w={13} h={12} sw={1.200}><path d="M1 12A11 11 0 0 1 12 1M4 12a8 8 0 0 1 8-7.500M7 12a5 5 0 0 1 5-4.500" /><circle cx="11" cy="11" r="1" fill="#fff" /></Svg>
          </TrayButton>
          <Language>ENG</Language>
          <Clock>13:17<br />13-10-2023</Clock>
          <button aria-label="1 notification">
            <svg width="24" height="24" viewBox="0 0 24 24" aria-hidden="true">
              <path d="M0 0h16v13H8l-3.500 3.500V13H0z" fill="#fff" /><path d="M3 3.500h10M3 6.500h10M3 9.500h6" stroke="#1d2e3a" />
              <circle cx="16" cy="15.500" r="7.500" fill="#26323b" stroke="#8a949b" />
              <text x="16" y="20" fill="#fff" fontFamily="Open Sans, sans-serif" fontSize="12" fontWeight="600" textAnchor="middle">1</text>
            </svg>
          </button>
          <DeskEdge aria-label="Show desktop" />
        </Tray>
      </TaskBar>
    </Window>
  );
}
